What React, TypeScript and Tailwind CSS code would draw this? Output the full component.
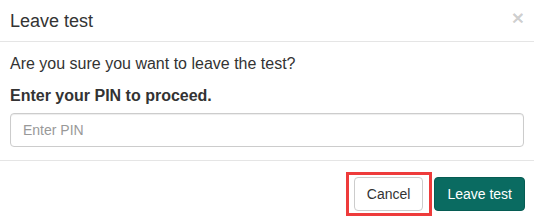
export default function App() {
  return (
    <div className="w-[534px] h-[217px] overflow-hidden bg-white text-[#333] font-['Liberation_Sans',Arial,sans-serif]">
      {/* Header */}
      <div className="flex items-center justify-between border-b border-[#e5e5e5] px-[10px] py-[7px]">
        <h4 className="text-[18px] leading-[26px]">Leave test</h4>
        <button className="mb-[6px] text-[21px] font-bold leading-none text-black/20">×</button>
      </div>

      {/* Body */}
      <div className="px-[10px] pt-[10px] pb-[13px]">
        <p className="mb-[8px] text-[16px] leading-[24px]">Are you sure you want to leave the test?</p>
        <p className="mb-[5px] text-[16px] font-bold leading-[24px]">Enter your PIN to proceed.</p>
        <input
          type="text"
          placeholder="Enter PIN"
          className="block h-[34px] w-full rounded-[4px] border border-[#ccc] px-[12px] text-[14px] shadow-[inset_0_1px_1px_rgba(0,0,0,0.075)] outline-none placeholder:text-[#999]"
        />
      </div>

      {/* Footer */}
      <div className="flex justify-end gap-[11px] border-t border-[#e5e5e5] pt-[16px] pr-[9px]">
        <div className="relative">
          <button className="h-[34px] rounded-[4px] border border-[#ccc] bg-white px-[12px] text-[14px] leading-[20px] text-[#333]">
            Cancel
          </button>
          <div className="pointer-events-none absolute -top-[5px] -bottom-[5px] -left-[8px] -right-[9px] border-[3px] border-[#ee3b3b]" />
        </div>
        <button className="h-[34px] rounded-[4px] border border-[#065c53] bg-[#0a6b61] px-[12px] text-[14px] leading-[20px] text-white">
          Leave test
        </button>
      </div>
    </div>
  );
}
